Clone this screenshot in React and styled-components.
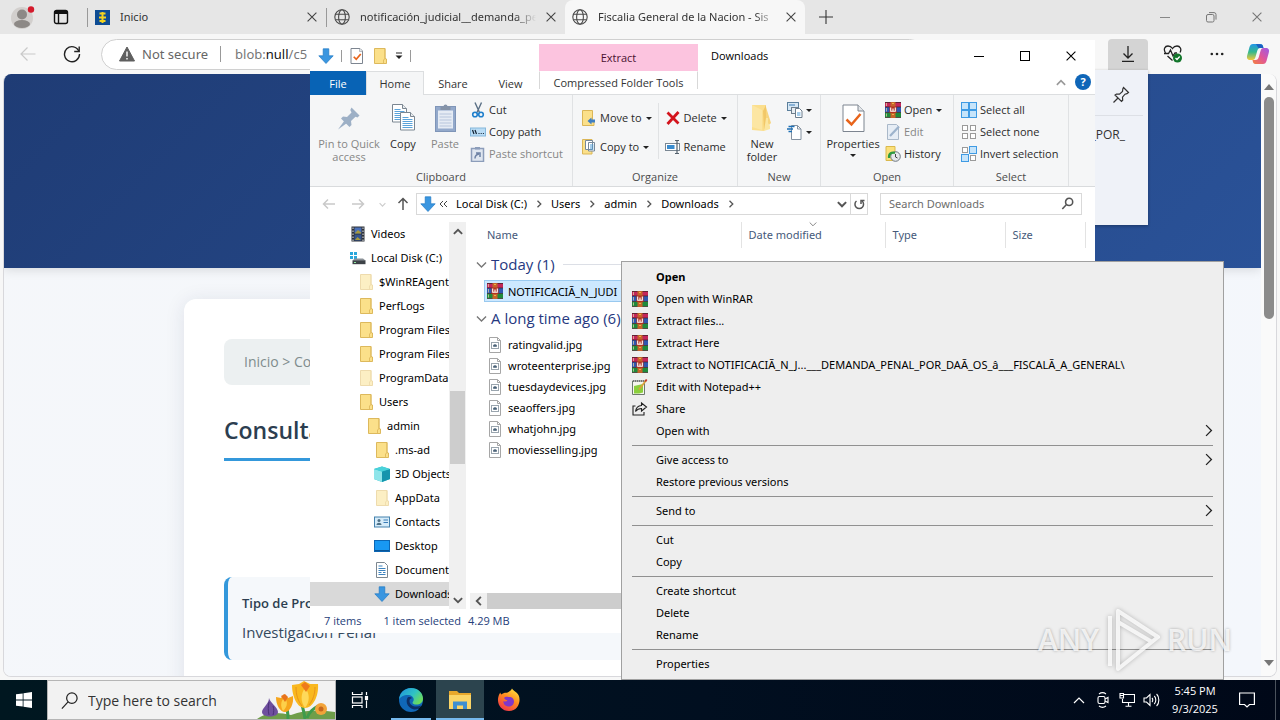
import React from 'react';
import styled, { createGlobalStyle } from 'styled-components';

const GlobalStyle = createGlobalStyle`
  * { box-sizing: border-box; }
  body {
    margin: 0;
    font-family: "Open Sans", "Noto Sans", sans-serif;
    font-size: 11px;
    color: #000;
    overflow: hidden;
  }
  button, input {
    font: inherit;
    color: inherit;
    border: 0;
    margin: 0;
    padding: 0;
    background: none;
  }
  a { color: inherit; text-decoration: none; }
  svg { display: block; flex: none; }
`;

const listFont = '"Noto Sans", "Open Sans", sans-serif';

/* ---------- icons ---------- */

const Svg = ({ w = 16, h, children, ...rest }) => (
  <svg width={w} height={h || w} viewBox={`0 0 ${w} ${h || w}`} fill="none" aria-hidden="true" {...rest}>
    {children}
  </svg>
);

const CloseIcon = ({ size = 10, color = '#444' }) => (
  <svg width={size} height={size} viewBox="0 0 10 10" aria-hidden="true">
    <path d="M.6.6l8.8 8.8M9.4.6L.6 9.4" stroke={color} strokeWidth="1.1" />
  </svg>
);

const GlobeIcon = () => (
  <Svg w={16} stroke="#4a4a4a" strokeWidth="1.1">
    <circle cx="8" cy="8" r="7.2" />
    <ellipse cx="8" cy="8" rx="3.4" ry="7.2" />
    <path d="M1.5 5.3h13M1.5 10.7h13" />
  </Svg>
);

const WinRarIcon = () => (
  <Svg w={16}>
    <rect y="0" width="16" height="5" fill="#c4265a" />
    <rect y="5" width="16" height="5.5" fill="#2f56b0" />
    <rect y="10.500" width="16" height="5" fill="#1f8a3b" />
    <path d="M0 .5h16M0 5h16M0 10.500h16M0 15.500h16" stroke="#3a2222" strokeWidth=".7" />
    <path d="M1.500 1v3M1.500 6v3.500M1.500 11.500v3" stroke="#d9c9a0" strokeWidth=".8" />
    <rect x="5.500" width="5" height="16" fill="#c5642a" />
    <rect x="4.500" y="4.500" width="7" height="6.500" fill="#b3331f" />
    <path d="M5.700 5.500v3.700h4.600V5.500M8 6.500v2.700" stroke="#fff" strokeWidth="1.100" />
    <path d="M7.200 1.500h1.600M7.200 12.500h1.600" stroke="#f3c64f" strokeWidth="1.200" />
  </Svg>
);

const FolderIcon = ({ faded, size = 16 }) => (
  <svg width={size} height={size} viewBox="0 0 16 16" opacity={faded ? 0.5 : 1} aria-hidden="true">
    <path d="M2.500.5h10.500v10l1.500.5v4.500H2.500z" fill="#fbe08a" stroke="#d9b250" strokeWidth=".9" />
    <path d="M13 .5v10.300l-1.500 1v3.700" fill="none" stroke="#dfba5d" strokeWidth=".9" />
  </svg>
);

const DownArrowIcon = () => (
  <Svg w={16}>
    <path d="M5.200.8h5.600v7h4.400L8 15.500.8 7.800h4.400z" fill="#3a96e0" stroke="#1f78c4" strokeWidth=".7" />
  </Svg>
);

const CheckPageIcon = ({ big }) => (
  <svg width={big ? 32 : 16} height={big ? 32 : 16} viewBox="0 0 32 32" fill="none" aria-hidden="true">
    <path d={big ? 'M6 3h15l6 6v20.500H6z' : 'M4 1h18l5 5v25H4z'} fill="#fff" stroke="#7d8590" strokeWidth={big ? 1 : 2} />
    <path d={big ? 'M21 3v6h6' : 'M21 1v6h6'} stroke="#7d8590" strokeWidth="1" fill="#e4e7ea" />
    <path d="M9.500 17.500l5 5L23.500 12" stroke="#e8641b" strokeWidth={big ? 2.500 : 3.500} />
  </svg>
);

const Caret = ({ color = '#222' }) => (
  <Svg w={6} h={3}><path d="M0 0h6L3 3z" fill={color} /></Svg>
);

const Chevron = ({ dir = 'right', color = '#555', size = 8, weight = 1.3 }) => {
  const turn = { right: 0, down: 90, left: 180, up: 270 }[dir];
  return (
    <svg width={size} height={size} viewBox="0 0 8 8" fill="none" aria-hidden="true">
      <path d="M2.500.7L5.800 4 2.500 7.300" stroke={color} strokeWidth={weight} transform={`rotate(${turn} 4 4)`} />
    </svg>
  );
};

const Arrow = ({ dir = 'left', color = '#c9c9c9' }) => (
  <Svg w={14} stroke={color} strokeWidth="1.500">
    <path
      d="M1.500 7h11.500M6 2.500L1.500 7 6 11.500"
      transform={`rotate(${{ left: 0, up: 90, right: 180 }[dir]} 7 7)`}
    />
  </Svg>
);

const ImageFileIcon = () => (
  <Svg w={16}>
    <path d="M2.500.5h8l3 3v12h-11z" fill="#fff" stroke="#a6a6a6" />
    <path d="M10.500.5v3h3" stroke="#a6a6a6" />
    <rect x="4.500" y="5.500" width="7" height="6" stroke="#9aa5ae" />
    <path d="M6.500 9.500V8l1.500-.5 1.500.5v1.500z" fill="#4b6378" stroke="#4b6378" strokeWidth=".6" />
  </Svg>
);

const VideosIcon = () => (
  <Svg w={16}>
    <rect x="1.500" y=".5" width="13" height="15" fill="#2e3238" />
    <rect x="4.500" y="1.500" width="7" height="6" fill="#4a70b8" />
    <rect x="4.500" y="8.500" width="7" height="6" fill="#35558f" />
    <path d="M5 7l3-3 3 2.500V7.500H5zM5 14l2.500-3 3.500 3z" fill="#a79a3c" />
    <path d="M3 1.500v14M13 1.500v14" stroke="#dfe3e8" strokeDasharray="1.500 1.500" />
  </Svg>
);

const DriveIcon = () => (
  <Svg w={16}>
    <path d="M0 2h3v3H0zM4 2h3v3H4zM0 6h3v3H0zM4 6h3v3H4z" fill="#2aa7dc" />
    <path d="M3 10l2-1.500h8l2.500 2v.5H2.500z" fill="#8b9197" />
    <path d="M2.500 10.500H15.500v3.700H2.500z" fill="#3d4247" />
    <path d="M4 12.500h2" stroke="#8fe6a0" />
  </Svg>
);

const CubeIcon = () => (
  <Svg w={16}>
    <path d="M0 3l8-2.500L16 3v10l-8 3-8-3z" fill="#29bccb" />
    <path d="M0 3l8 2.500V16l-8-3z" fill="#8fe5ea" />
    <path d="M8 5.500L16 3v10l-8 3z" fill="#1595ad" />
    <path d="M0 3l8-2.500L16 3 8 5.500z" fill="#4ad2da" />
  </Svg>
);

const ContactIcon = () => (
  <Svg w={16}>
    <rect x=".5" y="3" width="15" height="10" fill="#d5ebf9" stroke="#4481ad" />
    <circle cx="5" cy="6.500" r="1.500" fill="#4d7086" />
    <path d="M2.500 11c0-3 5-3 5 0z" fill="#4d7086" />
    <path d="M9.500 6h4.500M9.500 8.500h4.500" stroke="#3a7cb8" />
  </Svg>
);

const DesktopIcon = () => (
  <Svg w={16}>
    <rect x=".5" y="2.500" width="15" height="11" fill="#1898f2" stroke="#0b66b4" />
    <path d="M1 12.500h14" stroke="#0a5596" />
  </Svg>
);

const DocumentIcon = () => (
  <Svg w={16}>
    <path d="M2.500.5h8l3 3v12h-11z" fill="#fff" stroke="#7c8790" />
    <path d="M4.500 4h4M4.500 6.500h7M4.500 8.500h7M4.500 10.500h3M9 10.500h2.500M4.500 12.500h7" stroke="#3c83bf" />
  </Svg>
);

const PinBigIcon = () => (
  <Svg w={32}>
    <path d="M18.500 5.500l8 8-2 2-2-.7-4.500 4.200.5 4-2 2-8.500-8.500 2-2 4 .5 4.500-4.500-1.200-2.500z" fill="#9db0c6" />
    <path d="M11.500 18.500L5 27.500l9-6.500z" fill="#9db0c6" />
  </Svg>
);

const Page = ({ x, y }) => (
  <g transform={`translate(${x} ${y})`}>
    <path d="M.5.5h10l4 4v13.500H.5z" fill="#fff" stroke="#7b8691" />
    <path d="M10.500.5v4h4" stroke="#7b8691" fill="#e8ebee" />
    <path d="M2.500 5.500h6M2.500 7.500h10M2.500 9.500h10M2.500 11.500h10M2.500 13.500h10M2.500 15.500h10" stroke="#5ba3da" />
  </g>
);

const CopyBigIcon = () => (
  <Svg w={32}><Page x={5} y={2} /><Page x={13} y={10} /></Svg>
);

const PasteBigIcon = () => (
  <Svg w={32}>
    <rect x="6.500" y="4.500" width="20" height="25" fill="#93a9cb" stroke="#7f95b8" />
    <path d="M9 8.500h15v18H9z" fill="#e5ebf4" />
    <path d="M10.500 12h12M10.500 15h12M10.500 18h12M10.500 21h12M10.500 24h12" stroke="#b7c5dc" />
    <path d="M11.500 8V4.500h3a2 2 0 014 0h3V8z" fill="#8593a8" />
  </Svg>
);

const CutIcon = () => (
  <Svg w={16}>
    <path d="M5 .5l4.500 10M11.500.5L7 10.500" stroke="#5b7086" strokeWidth="1.400" />
    <circle cx="5" cy="12.500" r="2.300" stroke="#1f7fcc" strokeWidth="1.600" />
    <circle cx="11" cy="12.500" r="2.300" stroke="#1f7fcc" strokeWidth="1.600" />
  </Svg>
);

const CopyPathIcon = () => (
  <Svg w={16}>
    <rect x=".5" y="4" width="15" height="8" fill="#b9dcf5" stroke="#86b8dc" />
    <path d="M2.500 6l1.500 4M5 6l1.500 4" stroke="#123" strokeWidth="1.200" />
    <path d="M8.500 9.500h1M10.700 9.500h1M12.900 9.500h1" stroke="#123" strokeWidth="1.200" />
  </Svg>
);

const PasteShortcutIcon = () => (
  <Svg w={16}>
    <rect x="1.500" y="2.500" width="12" height="13" fill="#dfe6f0" stroke="#8c9dba" strokeWidth="1.500" />
    <path d="M5 3.500V1h5v2.500z" fill="#8c9dba" />
    <path d="M5 12.500c0-3 1-4 4-4.500M6 7h4v4" stroke="#6e82a5" strokeWidth="1.500" />
  </Svg>
);

const MoveToIcon = () => (
  <Svg w={16}>
    <path d="M1.500.5H11.500v10l1.500 1v4h-11.500z" fill="#fbe08a" stroke="#dbb657" />
    <path d="M14 9.500H10.500V7.500l-4 3.500 4 3.500v-2h3.500z" fill="#3f7fc2" />
  </Svg>
);

const CopyToIcon = () => (
  <Svg w={16}>
    <path d="M1.500.5H11v14.500H1.500z" fill="#fbe08a" stroke="#dbb657" />
    <path d="M4.500 1.500h7v9h-7zM7.500 3.500h6v8.500h-6z" fill="#fff" stroke="#76889a" />
    <path d="M9 6h3.500M9 8h3.500M9 10h3.500" stroke="#4a9ad6" />
  </Svg>
);

const DeleteIcon = () => (
  <Svg w={16}><path d="M2.500 2.500l11 11M13.500 2L2.500 14" stroke="#d3141d" strokeWidth="2.800" /></Svg>
);

const RenameIcon = () => (
  <Svg w={16}>
    <rect x=".5" y="4.500" width="14" height="7" fill="#fff" stroke="#7a8793" />
    <rect x="2" y="6" width="7.500" height="4" fill="#3a8ccf" />
    <path d="M12 2v12M10 1.500h4M10 14.500h4" stroke="#54616d" strokeWidth="1.200" />
  </Svg>
);

const NewFolderIcon = () => (
  <Svg w={32}>
    <path d="M6 3h14v22l-2 4-12-1z" fill="#fbdf8e" />
    <path d="M17 9l3-6v20l-2 6z" fill="#f2c868" />
    <path d="M20 5v18h3l2-2z" fill="#f7d57f" />
    <path d="M20 16h2v5l2 3v3l-6 2z" fill="#fbe6a0" />
    <path d="M6 3l10 5v20L6 25z" fill="#fce6a3" />
  </Svg>
);

const NewItemIcon = () => (
  <Svg w={16}>
    <rect x=".5" y=".5" width="11" height="8" fill="#d7e8f5" stroke="#5b7f9c" />
    <path d="M2 3h6" stroke="#3a7cb8" />
    <rect x="4.500" y="5.500" width="6" height="6" fill="#e8eef3" stroke="#6c7d8c" />
    <path d="M8.500 6.500h4l2.500 2.500v6.500H8.500z" fill="#fff" stroke="#6c7d8c" />
    <path d="M10 11h3.500M10 13h3.500" stroke="#4a9ad6" />
  </Svg>
);

const EasyAccessIcon = () => (
  <Svg w={16}>
    <path d="M4.500 1.500h6l3.500 3.500v10.500h-9.500z" fill="#fff" stroke="#8592a0" />
    <path d="M10.500 1.500v3.500h3.500" stroke="#8592a0" />
    <path d="M1.500 2.500h6M0 5h6M1.500 7.500H5" stroke="#1c6fb5" strokeWidth="1.500" />
  </Svg>
);

const EditIcon = () => (
  <Svg w={16}>
    <path d="M2.500.5h9l2 2v13h-11z" fill="#e6edf5" stroke="#a9b8c9" />
    <path d="M5 12L14 2.500" stroke="#9db3cc" strokeWidth="2.200" />
  </Svg>
);

const HistoryIcon = () => (
  <Svg w={16}>
    <path d="M1 .5h9v14H1z" fill="#fbe07a" stroke="#dab94c" />
    <circle cx="10.500" cy="10.500" r="4.800" fill="#e6e9ec" stroke="#6d7780" />
    <path d="M10.500 8v3l2 1" stroke="#444" />
    <path d="M4 12c-.5-5 3-6 6-5" stroke="#2e9b3f" strokeWidth="2.200" />
  </Svg>
);

const SelectIcon = ({ mode }) => {
  const on = { all: [1, 1, 1, 1], none: [0, 0, 0, 0], invert: [0, 1, 1, 0] }[mode];
  return (
    <Svg w={16}>
      {on.map((f, i) => (
        <rect
          key={i}
          x={(i % 2) * 8 + (f ? 0.5 : 1.5)}
          y={(i > 1 ? 8 : 0) + (f ? 0.5 : 1.5)}
          width={f ? 7 : 5}
          height={f ? 7 : 5}
          fill={f ? '#c6e4fa' : '#fff'}
          stroke={f ? '#3f9be4' : '#9a9a9a'}
        />
      ))}
    </Svg>
  );
};

const NotepadIcon = () => (
  <Svg w={16}>
    <path d="M.5 2h12v13.500H.5z" fill="#f5f5ee" stroke="#6e7a6e" />
    <path d="M2 7l9-2v8.500l-4 1H2z" fill="#8bcf3c" />
    <path d="M1 2h11" stroke="#777" strokeDasharray="1 1" strokeWidth="2" />
    <path d="M7 10.500L14 1.500" stroke="#d9a23b" strokeWidth="1.800" />
    <path d="M13.200 2.500l1.500-2" stroke="#c0392b" strokeWidth="1.800" />
  </Svg>
);

const ShareIcon = () => (
  <Svg w={16} stroke="#222" strokeWidth="1.100">
    <path d="M3.500 5H1v9h11v-3" />
    <path d="M9.500 2l5 4-5 4V7.500C6.500 7.500 5 8.500 3.500 10.500 4 7 6 4.700 9.500 4.500z" />
  </Svg>
);

const SearchIcon = ({ size = 20, color = '#222', weight = 1.300 }) => (
  <svg width={size} height={size} viewBox="0 0 20 20" fill="none" aria-hidden="true">
    <circle cx="12.500" cy="7.500" r="5.500" stroke={color} strokeWidth={weight} />
    <path d="M8.500 11.500L2 18.500" stroke={color} strokeWidth={weight} />
  </svg>
);

const CopilotIcon = () => (
  <Svg w={24}>
    <defs>
      <linearGradient id="cpA" x1="0" y1="0" x2="0" y2="1">
        <stop offset="0" stopColor="#2196e8" /><stop offset=".5" stopColor="#35b98c" /><stop offset="1" stopColor="#f5c93a" />
      </linearGradient>
      <linearGradient id="cpB" x1="1" y1="0" x2="0" y2="1">
        <stop offset="0" stopColor="#9b5be8" /><stop offset=".5" stopColor="#e0569a" /><stop offset="1" stopColor="#f4803d" />
      </linearGradient>
    </defs>
    <path d="M7 2h7.500c2 0 2.500 1.500 3 4h-3c-2 0-2.700 1-3.300 3l-1.700 6c-.6 2-1.300 3-3 3H4c-3 0-3.500-2.500-2.700-5L3.500 5C4.200 3 5 2 7 2z" fill="url(#cpA)" />
    <path d="M14 2.200c2 0 3 1 3.400 3.800h-5L10 2z" fill="#1c5fc2" />
    <path d="M17 22H9.500c-2 0-2.500-1.500-3-4h3c2 0 2.700-1 3.300-3l1.700-6c.6-2 1.300-3 3-3H20c3 0 3.500 2.500 2.700 5L20.500 19c-.7 2-1.500 3-3.500 3z" fill="url(#cpB)" />
  </Svg>
);

const EdgeIcon = () => (
  <Svg w={26}>
    <defs>
      <linearGradient id="edA" x1="0" y1="0" x2="1" y2=".6">
        <stop offset="0" stopColor="#1f8fdf" /><stop offset=".6" stopColor="#2fc2c4" /><stop offset="1" stopColor="#6bdc5d" />
      </linearGradient>
    </defs>
    <circle cx="13" cy="13" r="12" fill="#1067b8" />
    <path d="M1 12.500C1.500 6 6.500 1 13 1c7 0 12 5 12 10.500 0 4-3 6-6.500 6-2.500 0-4-.8-4-1.800 0-.7 1.200-1.300 1.200-3.200 0-2.500-2.500-4.500-6-4.500-4 0-7.500 1.800-8.700 4.500z" fill="url(#edA)" />
    <path d="M9.700 10.500c-2 3-1.700 9.500 6.300 12 3 .2 6-1.500 7.500-4-6 2.500-12 .5-12-4.500 0-1.800 1-2.600 2.500-3-1-1-3-1.200-4.300-.5z" fill="#0d2f66" />
    <path d="M20 22l6-5v6z" fill="#00131f" />
  </Svg>
);

const ExplorerIcon = () => (
  <Svg w={24}>
    <path d="M1 3h8l2 2h12v16H1z" fill="#e8a82c" />
    <path d="M1 7h22v14H1z" fill="#fbd567" />
    <path d="M5 21v-7.500h14V21h-4v-3.500H9V21z" fill="#3f8fd0" />
  </Svg>
);

const FirefoxIcon = () => (
  <Svg w={24}>
    <defs>
      <linearGradient id="ffA" x1=".8" y1="0" x2=".2" y2="1">
        <stop offset="0" stopColor="#ffe23e" /><stop offset=".45" stopColor="#ff8a1f" /><stop offset="1" stopColor="#f0304d" />
      </linearGradient>
    </defs>
    <path d="M15 .5c1 2 5 3.500 6.500 6.500 3 6-.5 16-9.500 16-7 0-11.500-6-11-12C1.200 8.500 2 6 3.500 4.500c0 1 .3 1.500.8 2C6 5 8 4.500 10 4.800 12 4 14 2.500 15 .5z" fill="url(#ffA)" />
    <path d="M7 10c1-1.500 3-1.500 4.500-1 2-.5 5.500.5 5.500 4.500 0 3-2.500 5-5.200 5C8.500 18.500 6 16 6.500 13c1 .8 3 .8 4-.5C9 12 8 11.500 7 10z" fill="#8037c9" />
  </Svg>
);

const FlowersArt = () => (
  <Svg w={78} h={38}>
    <path d="M0 38c8-6 18-8 34-4 14-6 32-5 44-3v7z" fill="#6f9e4a" />
    <path d="M31 38c0-8-1-12-3-16M48 38c-1-8-3-14-4-18M50 37c3-7 6-9 11-12" stroke="#3f9b4c" strokeWidth="3" />
    <path d="M12 17c1 5 9 9 9 14 0 3-4 4.500-8 4.500S5 34 5 31c0-4 7-8 7-14z" fill="#6f4f9e" />
    <path d="M12 21c-1 4-1 9 0 13M16 25c1 3 1 6 0 9" stroke="#4b3178" />
    <path d="M19 16l5 1 3-4 4 4 5-2c1 8-3 16-8 16s-9-7-9-15z" fill="#f6a51c" />
    <path d="M26 30c-3-5-2-10 1-13 4 3 4 8-1 13z" fill="#fdd04a" />
    <path d="M24 15l4-2 3 3-3 5z" fill="#e8731c" />
    <path d="M35 4l7-1 5-3 6 3 8 0c1 12-5 24-13 24S35 15 35 4z" fill="#f9b81f" />
    <path d="M48 27c-5-7-4-15 0-20 5 5 5 14 0 20z" fill="#fed95a" />
    <path d="M44 4l4-3 5 4-4 6z" fill="#ee7b1c" />
    <path d="M39 6c0 8 2 14 6 19M58 6c0 7-2 13-6 18" stroke="#e8951b" />
    <circle cx="64" cy="28" r="6" fill="#f2a43a" />
    <circle cx="64" cy="28" r="2.500" fill="#c7671c" />
  </Svg>
);

/* ---------- desktop ---------- */

const Desktop = styled.div`
  position: relative;
  display: flex;
  flex-direction: column;
  height: 100vh;
  overflow: hidden;
`;

/* ---------- browser window ---------- */

const Browser = styled.main`
  flex: 1;
  min-height: 0;
  display: flex;
  flex-direction: column;
  background: #f7f7f7;
`;

const TabStrip = styled.div`
  flex: none;
  display: flex;
  align-items: stretch;
  height: 34px;
  padding-left: 11px;
  background: #e6e6e6;
`;

const StripButton = styled.button`
  display: flex;
  align-items: center;
  justify-content: center;
  width: ${(p) => p.$w}px;
`;

const BrowserTab = styled.div`
  display: flex;
  align-items: center;
  gap: 10px;
  width: ${(p) => p.$w}px;
  padding: 0 9px 0 7px;
  border-left: ${(p) => (p.$active ? 0 : 1)}px solid transparent;
  border-image: linear-gradient(transparent 24%, #999 24%, #999 78%, transparent 78%) 1;
  ${(p) => p.$active && `
    border-image: none;
    background: #f7f7f7;
    border-radius: 8px 8px 0 0;
  `}
`;

const TabTitle = styled.span`
  flex: 1;
  overflow: hidden;
  padding-bottom: 1px;
  white-space: nowrap;
  color: #333;
  font-family: ${listFont};
  ${(p) => p.$fade && 'mask-image: linear-gradient(90deg, #000 88%, transparent);'}
`;

const Spacer = styled.div`
  flex: 1;
`;

const Toolbar = styled.div`
  flex: none;
  display: flex;
  align-items: center;
  height: 40px;
  padding-left: 10px;
`;

const AddressBar = styled.div`
  display: flex;
  align-items: center;
  flex: 1;
  height: 31px;
  margin: 0 183px 0 3px;
  padding-left: 17px;
  border: 1px solid #d0d0d0;
  border-radius: 16px;
  background: #fff;
  font-size: 13px;
  color: #666;
`;

const NotSecure = styled.span`
  margin-left: 7px;
  padding-right: 12px;
  border-right: 1px solid #999;
  font-family: ${listFont};
  line-height: 16px;
`;

const Url = styled.span`
  margin-left: 14px;
  font-family: ${listFont};
  color: #777;
  b { color: #111; font-weight: 400; }
`;

const ToolButton = styled.button`
  display: flex;
  align-items: center;
  justify-content: center;
  width: ${(p) => p.$w || 44}px;
  height: 31px;
  border-radius: 4px 4px 0 0;
  background: ${(p) => (p.$on ? '#d4d4d4' : 'none')};
`;

const PageFrame = styled.div`
  flex: 1;
  min-height: 0;
  display: flex;
  margin: 0 3px 3px;
  border: 1px solid #d8d8dc;
  border-top: 0;
  border-radius: 8px;
  overflow: hidden;
  background: #fafafa;
`;

const PageView = styled.div`
  flex: 1;
  background: linear-gradient(135deg, #f5f7fa, #f4f7fc);
`;

const Hero = styled.header`
  height: 194px;
  background: linear-gradient(135deg, #1f3c75, #2a5298);
  box-shadow: 0 2px 10px rgba(0, 0, 0, 0.12);
`;

const Card = styled.section`
  height: 520px;
  margin: 31px 160px 0 180px;
  padding: 40px;
  border-radius: 12px;
  background: #fff;
  box-shadow: 0 2px 20px rgba(30, 40, 80, 0.1);
`;

const Breadcrumb = styled.nav`
  padding: 14px 20px;
  border-radius: 8px;
  background: #ecf0f1;
  font-size: 14px;
  line-height: 18px;
  color: #7f8c8d;
`;

const Heading = styled.h2`
  margin: 29px 0 116px;
  padding-bottom: 12px;
  border-bottom: 3px solid #3498db;
  font-size: 23px;
  line-height: 32px;
  font-weight: 600;
  color: #2c3e50;
`;

const InfoBox = styled.div`
  height: 83px;
  padding: 16px 14px;
  border-left: 4px solid #3498db;
  border-radius: 8px;
  background: #f5f8fb;
  color: #34495e;
  font-size: 15px;
  line-height: 20px;
  strong {
    display: block;
    margin-bottom: 9px;
    font-size: 13px;
    font-weight: 600;
    color: #2c3e50;
  }
`;

const PageScroll = styled.div`
  width: 15px;
  display: flex;
  flex-direction: column;
  align-items: center;
  justify-content: space-between;
  padding: 10px 0 10px;
  background: #fafafa;
`;

const PageThumb = styled.div`
  width: 10px;
  height: 222px;
  margin: 7px 0 auto;
  border-radius: 5px;
  background: #8b8b8b;
`;

const Flyout = styled.aside`
  position: absolute;
  top: 70px;
  right: 132px;
  width: 340px;
  height: 155px;
  background: #eff2f8;
  box-shadow: 0 1px 3px rgba(0, 0, 0, 0.3);
  font-size: 12px;
  text-align: right;
`;

const FlyoutHead = styled.div`
  display: flex;
  justify-content: flex-end;
  align-items: center;
  height: 46px;
  margin: 0 5px 9px 0;
  padding: 5px 13px 0 0;
  border-bottom: 1px solid #dde0e6;
`;

const FlyoutItem = styled.div`
  padding-right: 23px;
  line-height: 20px;
  color: #333;
`;

/* ---------- explorer window ---------- */

const Explorer = styled.section`
  position: absolute;
  top: 40px;
  left: 310px;
  width: 785px;
  background: #fff;
`;

const TitleBar = styled.header`
  display: flex;
  align-items: stretch;
  height: 31px;
  padding-right: 1px;
  line-height: 31px;
`;

const QuickBar = styled.div`
  display: flex;
  align-items: center;
  gap: 7px;
  width: 229px;
  padding-left: 8px;
`;

const Divider = styled.i`
  width: 1px;
  height: ${(p) => p.$h || 12}px;
  background: ${(p) => p.$c || '#9a9a9a'};
`;

const ContextTab = styled.div`
  width: 159px;
  margin-top: 4px;
  line-height: 27px;
  background: #fcc4df;
  color: #4a1230;
  text-align: center;
`;

const WindowTitle = styled.h1`
  flex: 1;
  margin: 0 0 0 13px;
  font-size: 11px;
  font-weight: 400;
`;

const WindowButton = styled.button`
  display: flex;
  align-items: center;
  justify-content: center;
  width: 46px;
`;

const RibbonTabs = styled.nav`
  display: flex;
  align-items: stretch;
  height: 24px;
  border-bottom: 1px solid #dcdee0;
`;

const RibbonTab = styled.button`
  width: ${(p) => p.$w}px;
  margin-bottom: -1px;
  color: #333;
  border: 1px solid transparent;
  border-bottom: 0;
  ${(p) => p.$kind === 'file' && 'background: #0863b5; color: #fff;'}
  ${(p) => p.$kind === 'active' && 'background: #f5f6f7; border-color: #dcdee0;'}
  ${(p) => p.$kind === 'context' && 'border-color: transparent #d8d8d8; margin-bottom: 5px; padding-top: 3px;'}
`;

const Help = styled.button`
  width: 16px;
  height: 16px;
  margin: 3px 4px 0 9px;
  border-radius: 50%;
  background: #0f66b8;
  color: #fff;
  font-weight: 700;
  line-height: 16px;
`;

const Ribbon = styled.div`
  display: flex;
  height: 92px;
  background: #f5f6f7;
  border-bottom: 1px solid #d9dbdd;
  color: #2b2b2b;
`;

const RibbonGroup = styled.section`
  display: grid;
  grid-template-rows: 1fr 20px;
  width: ${(p) => p.$w}px;
  border-right: 1px solid #e0e2e4;
  h3 {
    margin: 0;
    font-size: 11px;
    line-height: 22px;
    font-weight: 400;
    text-align: center;
    color: #4c4c4c;
  }
`;

const GroupBody = styled.div`
  display: flex;
  align-items: flex-start;
  padding: 4px 0 0 ${(p) => p.$pl}px;
`;

const BigButton = styled.button`
  display: flex;
  flex-direction: column;
  align-items: center;
  width: ${(p) => p.$w}px;
  padding-top: 3px;
  line-height: 13px;
  color: ${(p) => (p.disabled ? '#868686' : 'inherit')};
  svg + span { margin-top: 3px; }
  span + svg { margin-top: 4px; }
`;

const ButtonColumn = styled.div`
  display: flex;
  flex-direction: column;
  gap: ${(p) => p.$gap || 0}px;
  padding: ${(p) => p.$pt || 0}px 0 0 ${(p) => p.$pl || 0}px;
`;

const SmallButton = styled.button`
  display: flex;
  align-items: center;
  gap: 3px;
  height: 22px;
  white-space: nowrap;
  color: ${(p) => (p.disabled ? '#868686' : 'inherit')};
  span { padding-bottom: 2px; }
  span + svg { margin-left: 1px; }
`;

const NavRow = styled.div`
  display: flex;
  align-items: center;
  height: 35px;
  padding: 0 13px 1px 12px;
`;

const NavButton = styled.button`
  display: flex;
  align-items: center;
  justify-content: center;
  width: ${(p) => p.$w || 14}px;
  margin-left: ${(p) => p.$ml || 0}px;
`;

const PathBox = styled.div`
  display: flex;
  align-items: center;
  flex: 1;
  height: 22px;
  margin: 0 12px 0 6px;
  border: 1px solid #d9d9d9;
  font-family: ${listFont};
`;

const Crumb = styled.a`
  margin-left: 8px;
  margin-right: 8px;
  padding-bottom: 2px;
`;

const PathButton = styled.button`
  display: flex;
  align-items: center;
  justify-content: center;
  width: 17px;
  height: 20px;
  border-left: ${(p) => (p.$line ? '1px solid #d9d9d9' : '0')};
`;

const SearchBox = styled.label`
  display: flex;
  align-items: center;
  width: 202px;
  height: 22px;
  padding: 0 7px 1px 8px;
  border: 1px solid #d9d9d9;
  font-family: ${listFont};
  input {
    flex: 1;
    min-width: 0;
    outline: 0;
  }
  input::placeholder { color: #6d6d6d; opacity: 1; }
`;

const Body = styled.div`
  display: flex;
  height: 387px;
  font-family: ${listFont};
`;

const Tree = styled.ul`
  width: 139px;
  margin: 0;
  padding: 0;
  list-style: none;
  overflow: hidden;
`;

const TreeItem = styled.li`
  display: flex;
  align-items: center;
  gap: 5px;
  height: 24px;
  padding: 0 0 1px ${(p) => 40 + p.$level * 8}px;
  white-space: nowrap;
  background: ${(p) => (p.$selected ? '#d9d9d9' : 'none')};
`;

const TreeScroll = styled.div`
  display: flex;
  flex-direction: column;
  align-items: center;
  width: 17px;
  margin-right: 4px;
  padding: 5px 0 4px;
  background: #f0f0f0;
`;

const TreeThumb = styled.div`
  width: 15px;
  height: 73px;
  margin: 154px 0 auto;
  background: #cdcdcd;
`;

const ListPane = styled.div`
  flex: 1;
  display: flex;
  flex-direction: column;
  justify-content: space-between;
`;

const FileTable = styled.table`
  width: 100%;
  table-layout: fixed;
  border-collapse: collapse;
  th, td {
    padding: 0;
    font-weight: 400;
    text-align: left;
    white-space: nowrap;
  }
  thead th {
    position: relative;
    height: 26px;
    padding: 0 0 1px 7px;
    border-right: 1px solid #e3e3e3;
    color: #45597a;
  }
  thead th:first-child { padding-left: 17px; }
  thead th:last-child { border: 0; }
`;

const SortMark = styled.span`
  position: absolute;
  top: -2px;
  left: 67px;
`;

const GroupLabel = styled.div`
  display: flex;
  align-items: center;
  gap: 4px;
  height: 32px;
  padding: 0 10px 0 6px;
  font-family: "Open Sans", sans-serif;
  font-size: 15px;
  color: #26387f;
  &::after {
    content: "";
    flex: 1;
    height: 1px;
    margin-left: 4px;
    background: #dcdfe6;
  }
`;

const FileName = styled.div`
  display: flex;
  align-items: center;
  gap: 5px;
  height: ${(p) => (p.$selected ? 22 : 21)}px;
  margin-left: 14px;
  padding-left: 3px;
  ${(p) => p.$selected && `
    background: #cce8ff;
    outline: 1px solid #99c9ef;
    outline-offset: -1px;
  `}
`;

const HScroll = styled.div`
  display: flex;
  height: 16px;
  background: #cdcdcd;
`;

const HScrollButton = styled.button`
  display: flex;
  align-items: center;
  justify-content: center;
  width: 17px;
  background: #f0f0f0;
`;

const StatusBar = styled.footer`
  display: flex;
  height: 24px;
  padding-left: 14px;
  line-height: 23px;
  color: #26407a;
  span:first-child { margin-right: 22px; }
  span:nth-child(2) { margin-right: 7px; }
`;

/* ---------- context menu ---------- */

const Menu = styled.div`
  position: absolute;
  top: 261px;
  left: 621px;
  width: 603px;
  padding: 4px 0;
  border: 1px solid #a0a0a0;
  background: #eee;
  font-family: ${listFont};
`;

const MenuItem = styled.button`
  display: flex;
  align-items: center;
  gap: 8px;
  width: 100%;
  height: 22px;
  padding: 0 8px 1px 10px;
  font-weight: ${(p) => (p.$bold ? 700 : 400)};
  text-align: left;
`;

const IconSlot = styled.span`
  width: 16px;
`;

const MenuText = styled.span`
  flex: 1;
`;

const MenuRule = styled.hr`
  height: 1px;
  margin: 3px 10px;
  border: 0;
  background: #909090;
`;

/* ---------- watermark ---------- */

const Watermark = styled.div`
  position: absolute;
  right: 48px;
  top: 606px;
  display: flex;
  align-items: center;
  gap: 5px;
  font: 600 30px/68px "Open Sans", sans-serif;
  color: rgba(255, 255, 255, 0.8);
  text-shadow: 0 0 3px rgba(0, 0, 0, 0.3);
  svg { filter: drop-shadow(0 0 2px rgba(0, 0, 0, 0.3)); }
`;

/* ---------- taskbar ---------- */

const Taskbar = styled.footer`
  flex: none;
  display: flex;
  height: 40px;
  background: linear-gradient(90deg, #001720, #010f20 55%, #000818);
  color: #fff;
`;

const TaskButton = styled.button`
  display: flex;
  align-items: center;
  justify-content: center;
  width: ${(p) => p.$w || 48}px;
  ${(p) => p.$on && 'background: #2c444e;'}
  ${(p) => p.$run && 'box-shadow: inset 0 -2px #76b9ed;'}
`;

const TaskGap = styled.div`
  width: ${(p) => p.$w}px;
`;

const TaskSearch = styled.label`
  display: flex;
  align-items: center;
  width: 289px;
  padding-left: 12px;
  border: 1px solid #b5b5b5;
  background: #f2f2f2;
  overflow: hidden;
  input {
    flex: 1;
    min-width: 0;
    margin-left: 9px;
    font-size: 14px;
    outline: 0;
  }
  input::placeholder { color: #333; opacity: 1; }
  > svg:last-child { align-self: flex-end; }
`;

const Clock = styled.time`
  width: 64px;
  padding-top: 2px;
  text-align: center;
  line-height: 18px;
`;

const ShowDesktop = styled.button`
  width: 5px;
  border-left: 1px solid #4a525c;
`;

/* ---------- data ---------- */

const treeRows = [
  ['Videos', 0, <VideosIcon />],
  ['Local Disk (C:)', 0, <DriveIcon />],
  ['$WinREAgent', 1, <FolderIcon faded />],
  ['PerfLogs', 1, <FolderIcon />],
  ['Program Files', 1, <FolderIcon />],
  ['Program Files', 1, <FolderIcon />],
  ['ProgramData', 1, <FolderIcon faded />],
  ['Users', 1, <FolderIcon />],
  ['admin', 2, <FolderIcon />],
  ['.ms-ad', 3, <FolderIcon />],
  ['3D Objects', 3, <CubeIcon />],
  ['AppData', 3, <FolderIcon faded />],
  ['Contacts', 3, <ContactIcon />],
  ['Desktop', 3, <DesktopIcon />],
  ['Documents', 3, <DocumentIcon />],
  ['Downloads', 3, <DownArrowIcon />, true],
];

const files = [
  'ratingvalid.jpg', 'wroteenterprise.jpg', 'tuesdaydevices.jpg',
  'seaoffers.jpg', 'whatjohn.jpg', 'moviesselling.jpg',
];

const menuRows = [
  { text: 'Open', bold: true },
  { text: 'Open with WinRAR', icon: <WinRarIcon /> },
  { text: 'Extract files...', icon: <WinRarIcon /> },
  { text: 'Extract Here', icon: <WinRarIcon /> },
  { text: 'Extract to NOTIFICACIÃ_N_J...___DEMANDA_PENAL_POR_DAÃ_OS_â___FISCALÃ_A_GENERAL\\', icon: <WinRarIcon /> },
  { text: 'Edit with Notepad++', icon: <NotepadIcon /> },
  { text: 'Share', icon: <ShareIcon /> },
  { text: 'Open with', sub: true },
  null,
  { text: 'Give access to', sub: true },
  { text: 'Restore previous versions' },
  null,
  { text: 'Send to', sub: true },
  null,
  { text: 'Cut' },
  { text: 'Copy' },
  null,
  { text: 'Create shortcut' },
  { text: 'Delete' },
  { text: 'Rename' },
  null,
  { text: 'Properties' },
];

const Small = ({ icon, text, caret, disabled }) => (
  <SmallButton type="button" disabled={disabled}>
    {icon}
    <span>{text}</span>
    {caret && <Caret />}
  </SmallButton>
);

function BrowserWindow() {
  return (
    <Browser>
      <TabStrip>
        <StripButton $w={24} aria-label="Profile">
          <Svg w={24}>
            <circle cx="11" cy="13" r="11" fill="#d2cfcd" />
            <circle cx="11" cy="9.500" r="5" fill="#8d8986" />
            <ellipse cx="11" cy="19" rx="8" ry="4" fill="#8d8986" />
            <circle cx="20" cy="4.500" r="3.200" fill="#d41a2c" />
          </Svg>
        </StripButton>
        <StripButton $w={52} aria-label="Tab actions">
          <Svg w={16} stroke="#111" strokeWidth="1.400">
            <rect x="1.500" y="1.500" width="13" height="13" rx="2" />
            <path d="M2 3.500h12" strokeWidth="3" />
            <path d="M5.500 4v10" />
          </Svg>
        </StripButton>
        <BrowserTab $w={239}>
          <Svg w={15}>
            <rect width="15" height="15" fill="#0d4c94" />
            <path d="M7.500 2v11M4.500 3.500h6M4 7.500h7M4.500 11h6" stroke="#f3d21f" strokeWidth="2" />
          </Svg>
          <TabTitle>Inicio</TabTitle>
          <CloseIcon />
        </BrowserTab>
        <BrowserTab $w={239}>
          <GlobeIcon />
          <TabTitle $fade>notificación_judicial__demanda_pe</TabTitle>
          <CloseIcon />
        </BrowserTab>
        <BrowserTab $w={240} $active>
          <GlobeIcon />
          <TabTitle $fade>Fiscalia General de la Nacion - Sis</TabTitle>
          <CloseIcon />
        </BrowserTab>
        <StripButton $w={42} aria-label="New tab">
          <Svg w={14}><path d="M7 0v14M0 7h14" stroke="#333" strokeWidth="1.100" /></Svg>
        </StripButton>
        <Spacer />
        <StripButton $w={46} aria-label="Minimize"><Svg w={10}><path d="M0 5.500h10" stroke="#888" /></Svg></StripButton>
        <StripButton $w={46} aria-label="Restore">
          <Svg w={11} stroke="#777"><rect x=".5" y="2.500" width="7.500" height="7.500" rx="1.500" /><path d="M3 .6h5a2 2 0 012 2v5" /></Svg>
        </StripButton>
        <StripButton $w={46} aria-label="Close"><CloseIcon color="#777" /></StripButton>
      </TabStrip>
      <Toolbar>
        <ToolButton $w={36} aria-label="Back">
          <Svg w={16} stroke="#c9c9c9" strokeWidth="1.200"><path d="M15.500 8H1M7.500 1.500L1 8l6.500 6.500" /></Svg>
        </ToolButton>
        <ToolButton $w={52} aria-label="Refresh">
          <Svg w={18} stroke="#222" strokeWidth="1.400"><path d="M16 6.500A7.500 7.500 0 1016.500 9" /><path d="M16.200 1.500v5h-5" /></Svg>
        </ToolButton>
        <AddressBar>
          <Svg w={16}>
            <path d="M8 1l7.500 14H.5z" fill="#5f5f5f" stroke="#5f5f5f" strokeLinejoin="round" />
            <path d="M8 5.500v5M8 12v1.500" stroke="#fff" strokeWidth="1.400" />
          </Svg>
          <NotSecure>Not secure</NotSecure>
          <Url>blob:<b>null</b>/c5</Url>
        </AddressBar>
        <ToolButton $w={40} $on aria-label="Downloads">
          <Svg w={16} stroke="#222" strokeWidth="1.300"><path d="M8 0v12M3.500 7.500L8 12l4.500-4.500M2 15.300h12" /></Svg>
        </ToolButton>
        <ToolButton $w={50} aria-label="Browser essentials">
          <Svg w={20} stroke="#222" strokeWidth="1.300">
            <path d="M2.500 9C0 5 2 2 5 2c2 0 3.500 1 4.500 2.500C10.500 3 12 2 14 2c3 0 5 3 3 6.500M4.500 12l5 4.500" />
            <path d="M1 9.500h4.500l2-3.500 2.500 6 2-3h2" />
            <circle cx="14.500" cy="14" r="4.500" fill="#12762b" stroke="none" />
            <path d="M12.500 14l1.500 1.500 2.700-3" stroke="#fff" />
          </Svg>
        </ToolButton>
        <ToolButton $w={38} aria-label="Settings">
          <Svg w={14} h={4}><circle cx="1.800" cy="2" r="1.300" fill="#222" /><circle cx="7" cy="2" r="1.300" fill="#222" /><circle cx="12.200" cy="2" r="1.300" fill="#222" /></Svg>
        </ToolButton>
        <ToolButton $w={44} aria-label="Copilot"><CopilotIcon /></ToolButton>
      </Toolbar>
      <PageFrame>
        <PageView>
          <Hero />
          <Card>
            <Breadcrumb>Inicio &gt; Co</Breadcrumb>
            <Heading>Consulta</Heading>
            <InfoBox>
              <strong>Tipo de Pro</strong>
              Investigación Penal
            </InfoBox>
          </Card>
        </PageView>
        <PageScroll>
          <Svg w={10} h={6}><path d="M5 0l5 6H0z" fill="#777" /></Svg>
          <PageThumb />
          <Svg w={10} h={6}><path d="M0 0h10L5 6z" fill="#777" /></Svg>
        </PageScroll>
      </PageFrame>
      <Flyout>
        <FlyoutHead>
          <Svg w={18} stroke="#333" strokeWidth="1.200">
            <path d="M11.500 1.500l5 5-1.500 1.200-2 .5-2.500 3 .2 3-1.200 1.300-6.500-6.500L4.500 8l3 .2 3-2.700.3-2.500zM6 12l-4.500 4.500" />
          </Svg>
        </FlyoutHead>
        <FlyoutItem>_POR_</FlyoutItem>
      </Flyout>
    </Browser>
  );
}

function ExplorerWindow() {
  return (
    <Explorer>
      <TitleBar>
        <QuickBar>
          <DownArrowIcon /><Divider /><CheckPageIcon /><FolderIcon />
          <Svg w={8} h={8}><path d="M1 1h6" stroke="#222" /><path d="M.5 3.500h7L4 7z" fill="#222" /></Svg>
          <Divider />
        </QuickBar>
        <ContextTab>Extract</ContextTab>
        <WindowTitle>Downloads</WindowTitle>
        <WindowButton aria-label="Minimize"><Svg w={10}><path d="M0 5.500h10" stroke="#000" /></Svg></WindowButton>
        <WindowButton aria-label="Maximize"><Svg w={10}><rect x=".5" y=".5" width="9" height="9" stroke="#000" /></Svg></WindowButton>
        <WindowButton aria-label="Close"><CloseIcon color="#000" /></WindowButton>
      </TitleBar>
      <RibbonTabs>
        <RibbonTab $w={56} $kind="file">File</RibbonTab>
        <RibbonTab $w={58} $kind="active">Home</RibbonTab>
        <RibbonTab $w={58}>Share</RibbonTab>
        <RibbonTab $w={57}>View</RibbonTab>
        <RibbonTab $w={159} $kind="context">Compressed Folder Tools</RibbonTab>
        <Spacer />
        <NavButton $w={10} aria-label="Collapse ribbon"><Chevron dir="up" color="#999" size={10} /></NavButton>
        <Help aria-label="Help">?</Help>
      </RibbonTabs>
      <Ribbon>
        <RibbonGroup $w={263}>
          <GroupBody $pl={6}>
            <BigButton $w={66} disabled><PinBigIcon /><span>Pin to Quick access</span></BigButton>
            <BigButton $w={42}><CopyBigIcon /><span>Copy</span></BigButton>
            <BigButton $w={42} disabled><PasteBigIcon /><span>Paste</span></BigButton>
            <ButtonColumn $pl={4}>
              <Small icon={<CutIcon />} text="Cut" />
              <Small icon={<CopyPathIcon />} text="Copy path" />
              <Small icon={<PasteShortcutIcon />} text="Paste shortcut" disabled />
            </ButtonColumn>
          </GroupBody>
          <h3>Clipboard</h3>
        </RibbonGroup>
        <RibbonGroup $w={165}>
          <GroupBody $pl={8}>
            <ButtonColumn $pt={8} $gap={7}>
              <Small icon={<MoveToIcon />} text="Move to" caret />
              <Small icon={<CopyToIcon />} text="Copy to" caret />
            </ButtonColumn>
            <ButtonColumn $pl={6} $pt={4}><Divider $h={56} $c="#e0e2e4" /></ButtonColumn>
            <ButtonColumn $pl={6} $pt={8} $gap={7}>
              <Small icon={<DeleteIcon />} text="Delete" caret />
              <Small icon={<RenameIcon />} text="Rename" />
            </ButtonColumn>
          </GroupBody>
          <h3>Organize</h3>
        </RibbonGroup>
        <RibbonGroup $w={83}>
          <GroupBody $pl={3}>
            <BigButton $w={42}><NewFolderIcon /><span>New folder</span></BigButton>
            <ButtonColumn $pl={4}>
              <SmallButton aria-label="New item"><NewItemIcon /><Caret /></SmallButton>
              <SmallButton aria-label="Easy access"><EasyAccessIcon /><Caret /></SmallButton>
            </ButtonColumn>
          </GroupBody>
          <h3>New</h3>
        </RibbonGroup>
        <RibbonGroup $w={133}>
          <GroupBody $pl={4}>
            <BigButton $w={56}><CheckPageIcon big /><span>Properties</span><Caret /></BigButton>
            <ButtonColumn $pl={4}>
              <Small icon={<WinRarIcon />} text="Open" caret />
              <Small icon={<EditIcon />} text="Edit" disabled />
              <Small icon={<HistoryIcon />} text="History" />
            </ButtonColumn>
          </GroupBody>
          <h3>Open</h3>
        </RibbonGroup>
        <RibbonGroup $w={115}>
          <GroupBody $pl={7}>
            <ButtonColumn>
              <Small icon={<SelectIcon mode="all" />} text="Select all" />
              <Small icon={<SelectIcon mode="none" />} text="Select none" />
              <Small icon={<SelectIcon mode="invert" />} text="Invert selection" />
            </ButtonColumn>
          </GroupBody>
          <h3>Select</h3>
        </RibbonGroup>
      </Ribbon>
      <NavRow>
        <NavButton aria-label="Back"><Arrow /></NavButton>
        <NavButton $ml={15} aria-label="Forward"><Arrow dir="right" /></NavButton>
        <NavButton $ml={10} aria-label="Recent"><Chevron dir="down" color="#ccc" size={7} /></NavButton>
        <NavButton $ml={7} aria-label="Up"><Arrow dir="up" color="#555" /></NavButton>
        <PathBox>
          <NavButton $w={22} aria-label="Location"><DownArrowIcon /></NavButton>
          <Svg w={9} h={8} stroke="#444"><path d="M4 1L1 4l3 3M8 1L5 4l3 3" /></Svg>
          <Crumb href="#c">Local Disk (C:)</Crumb><Chevron />
          <Crumb href="#users">Users</Crumb><Chevron />
          <Crumb href="#admin">admin</Crumb><Chevron />
          <Crumb href="#downloads">Downloads</Crumb><Chevron />
          <Spacer />
          <PathButton aria-label="Previous locations"><Chevron dir="down" size={10} weight={1.6} /></PathButton>
          <PathButton $line aria-label="Refresh">
            <Svg w={12} stroke="#555" strokeWidth="1.500"><path d="M3.500 3A4.300 4.300 0 109 3" /><path d="M8 6V2.500h3.500" /></Svg>
          </PathButton>
        </PathBox>
        <SearchBox>
          <input type="text" placeholder="Search Downloads" aria-label="Search Downloads" />
          <SearchIcon size={13} color="#555" weight={2.4} />
        </SearchBox>
      </NavRow>
      <Body>
        <Tree>
          {treeRows.map(([name, level, icon, selected], i) => (
            <TreeItem key={i} $level={level} $selected={selected}>{icon}{name}</TreeItem>
          ))}
        </Tree>
        <TreeScroll>
          <Chevron dir="up" size={10} weight={1.5} />
          <TreeThumb />
          <Chevron dir="down" size={10} weight={1.5} />
        </TreeScroll>
        <ListPane>
          <FileTable>
            <colgroup>
              <col width="271" /><col width="144" /><col width="120" /><col width="80" /><col />
            </colgroup>
            <thead>
              <tr>
                <th>Name</th>
                <th>Date modified<SortMark><Chevron dir="down" color="#888" weight={1} /></SortMark></th>
                <th>Type</th>
                <th>Size</th>
                <th aria-hidden="true" />
              </tr>
            </thead>
            <tbody>
              <tr>
                <td colSpan="5"><GroupLabel><Chevron dir="down" color="#777" size={11} weight={1} />Today (1)</GroupLabel></td>
              </tr>
              <tr>
                <td colSpan="4"><FileName $selected><WinRarIcon />NOTIFICACIÃ_N_JUDI</FileName></td>
              </tr>
              <tr>
                <td colSpan="5"><GroupLabel><Chevron dir="down" color="#777" size={11} weight={1} />A long time ago (6)</GroupLabel></td>
              </tr>
              {files.map((f) => (
                <tr key={f}><td><FileName><ImageFileIcon />{f}</FileName></td></tr>
              ))}
            </tbody>
          </FileTable>
          <HScroll>
            <HScrollButton aria-label="Scroll left"><Chevron dir="left" size={10} weight={1.5} /></HScrollButton>
          </HScroll>
        </ListPane>
      </Body>
      <StatusBar><span>7 items</span><span>1 item selected</span><span>4.29 MB</span></StatusBar>
    </Explorer>
  );
}

export default function App() {
  return (
    <Desktop>
      <GlobalStyle />
      <BrowserWindow />
      <ExplorerWindow />
      <Taskbar>
        <TaskButton $w={47} aria-label="Start">
          <Svg w={16}><path d="M0 2.300L6.700 1.400v6.200H0zM7.500 1.200L16 0v7.600H7.500zM0 8.400h6.700v6.200L0 13.700zM7.500 8.400H16V16l-8.500-1.200z" fill="#fff" /></Svg>
        </TaskButton>
        <TaskSearch>
          <SearchIcon size={19} />
          <input type="text" placeholder="Type here to search" aria-label="Type here to search" />
          <FlowersArt />
        </TaskSearch>
        <TaskButton aria-label="Task view">
          <Svg w={18} stroke="#fff" strokeWidth="1.200">
            <path d="M1.500 1v2.500h9.500V1M1.500 17v-2.500h9.500V17" /><rect x="1.500" y="6" width="9.500" height="6" /><path d="M15.500 1v3M15.500 9.500V17" /><rect x="14.500" y="5.500" width="2" height="3" fill="#fff" />
          </Svg>
        </TaskButton>
        <TaskGap $w={7} />
        <TaskButton $w={40} $run aria-label="Edge"><EdgeIcon /></TaskButton>
        <TaskGap $w={5} />
        <TaskButton $on $run aria-label="File Explorer"><ExplorerIcon /></TaskButton>
        <TaskButton $w={50} aria-label="Firefox"><FirefoxIcon /></TaskButton>
        <Spacer />
        <TaskButton $w={24} aria-label="Hidden icons">
          <Svg w={12} h={8} stroke="#fff" strokeWidth="1.200"><path d="M1 7l5-5 5 5" /></Svg>
        </TaskButton>
        <TaskButton $w={24} aria-label="Meet now">
          <Svg w={14} h={16} stroke="#fff" strokeWidth="1.100">
            <rect x="2" y="4.500" width="7" height="7" rx="1.500" /><path d="M9 7l3-1.500v5L9 9M3 2C5 .5 8 .5 10 2M3 14c2 1.500 5 1.500 7 0" />
          </Svg>
        </TaskButton>
        <TaskButton $w={24} aria-label="Network">
          <Svg w={16} stroke="#fff" strokeWidth="1.100">
            <path d="M5 2.500h10.500v8H3.500V7M9.500 10.500V14M6.500 14.200h6M1 1.500h3.500V6H1zM1 3.500h3.500" />
          </Svg>
        </TaskButton>
        <TaskButton $w={24} aria-label="Volume">
          <Svg w={17} h={14} stroke="#fff" strokeWidth="1.100">
            <path d="M1 5h2.500L7 1.500v11L3.500 9H1zM9 5c1 1 1 3 0 4M11.300 3c2 2 2 6 0 8M13.600 1c3 3 3 9 0 12" />
          </Svg>
        </TaskButton>
        <Clock>5:45 PM<br />9/3/2025</Clock>
        <TaskButton $w={40} aria-label="Notifications">
          <Svg w={16} stroke="#fff" strokeWidth="1.200"><path d="M.6 1h14.800v11.500H10.500L8 15l-2.500-2.500H.6z" /></Svg>
        </TaskButton>
        <TaskGap $w={8} />
        <ShowDesktop aria-label="Show desktop" />
      </Taskbar>
      <Menu role="menu">
        {menuRows.map((row, i) =>
          row ? (
            <MenuItem key={i} role="menuitem" $bold={row.bold}>
              <IconSlot>{row.icon}</IconSlot>
              <MenuText>{row.text}</MenuText>
              {row.sub && <Chevron color="#222" size={13} weight={0.8} />}
            </MenuItem>
          ) : (
            <MenuRule key={i} />
          )
        )}
      </Menu>
      <Watermark>
        ANY
        <Svg w={58} h={64} stroke="rgba(255,255,255,0.8)" strokeWidth="4" strokeLinejoin="round">
          <path d="M14 3v58L54 29z M6 8v50 M14 14l34 20" />
        </Svg>
        RUN
      </Watermark>
    </Desktop>
  );
}
